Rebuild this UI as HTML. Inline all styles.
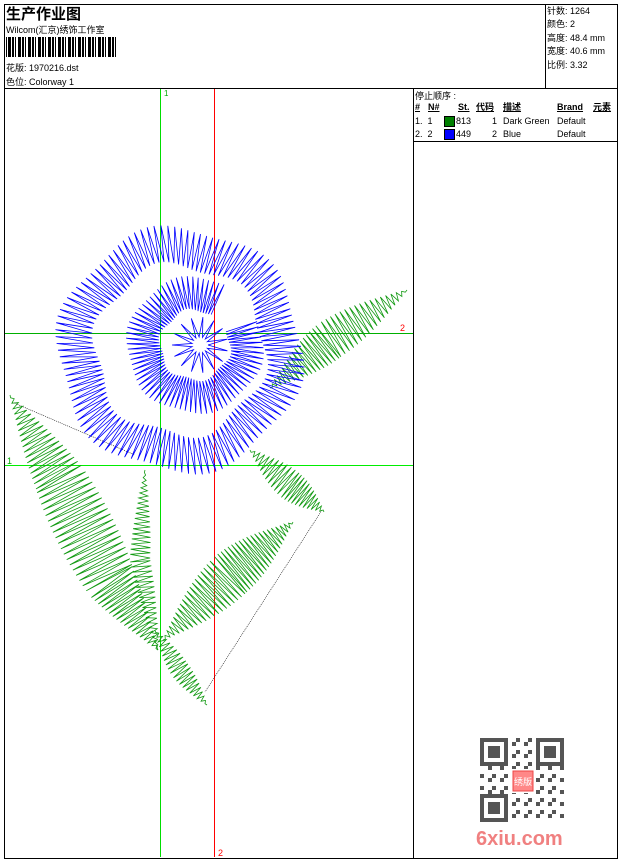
<!DOCTYPE html>
<html><head><meta charset="utf-8"><style>
body{margin:0;width:620px;height:860px;background:#fff;position:relative;overflow:hidden;font-family:"Liberation Sans","Noto Sans CJK SC",sans-serif;color:#000}
.a{position:absolute}
.t{font-size:10px;white-space:nowrap}
</style></head><body>
<div class="a" style="left:4px;top:4px;width:612px;height:853px;border:1px solid #000"></div>
<div class="a" style="left:4px;top:88px;width:613px;height:1px;background:#000"></div>
<div class="a" style="left:545px;top:4px;width:1px;height:84px;background:#000"></div>
<div class="a" style="left:413px;top:88px;width:1px;height:770px;background:#000"></div>
<div class="a" style="left:413px;top:141px;width:204px;height:1px;background:#000"></div>
<div class="a" style="left:6px;top:3px;font-size:15px;font-weight:bold">生产作业图</div>
<div class="a t" style="left:6px;top:23px;font-size:9px">Wilcom(汇京)绣饰工作室</div>
<svg class="a" style="left:6px;top:37px" width="114" height="20" id="bc"></svg>
<div class="a t" style="left:6px;top:61px;font-size:9px">花版: 1970216.dst</div>
<div class="a t" style="left:6px;top:75px;font-size:9px">色位: Colorway 1</div>
<div class="a t" style="left:547px;top:5px;font-size:9px;line-height:13.4px">针数: 1264<br>颜色: 2<br>高度: 48.4 mm<br>宽度: 40.6 mm<br>比例: 3.32</div>
<div class="a t" style="left:415px;top:89px;font-size:9px">停止顺序 :</div>
<div class="a" style="left:415px;top:101px;font-size:9px;line-height:13px;white-space:nowrap">
<span class="a" style="left:0;font-weight:bold;text-decoration:underline">#</span>
<span class="a" style="left:13px;font-weight:bold;text-decoration:underline">N#</span>
<span class="a" style="left:43px;font-weight:bold;text-decoration:underline">St.</span>
<span class="a" style="left:61px;font-weight:bold;text-decoration:underline">代码</span>
<span class="a" style="left:88px;font-weight:bold;text-decoration:underline">描述</span>
<span class="a" style="left:142px;font-weight:bold;text-decoration:underline">Brand</span>
<span class="a" style="left:178px;font-weight:bold;text-decoration:underline">元素</span>
<span class="a" style="left:0;top:14px">1.&nbsp;&nbsp;1</span>
<span class="a" style="left:29px;top:15px;width:9px;height:9px;background:#008000;border:1px solid #000"></span>
<span class="a" style="left:41px;top:14px">813</span>
<span class="a" style="left:77px;top:14px">1</span>
<span class="a" style="left:88px;top:14px">Dark Green</span>
<span class="a" style="left:142px;top:14px">Default</span>
<span class="a" style="left:0;top:27px">2.&nbsp;&nbsp;2</span>
<span class="a" style="left:29px;top:28px;width:9px;height:9px;background:#0000ff;border:1px solid #000"></span>
<span class="a" style="left:41px;top:27px">449</span>
<span class="a" style="left:77px;top:27px">2</span>
<span class="a" style="left:88px;top:27px">Blue</span>
<span class="a" style="left:142px;top:27px">Default</span>
</div>
<svg class="a" style="left:0;top:0" width="413" height="860" id="d">
<line x1="160.5" y1="89" x2="160.5" y2="857" stroke="#00dd00"/>
<line x1="5" y1="465.5" x2="413" y2="465.5" stroke="#00ee00"/>
<line x1="214.5" y1="89" x2="214.5" y2="857" stroke="#ff0000"/>
<line x1="5" y1="333.5" x2="413" y2="333.5" stroke="#00b000"/>
<text x="164" y="96" fill="#00aa00" font-size="8">1</text>
<text x="400" y="331" fill="#ff0000" font-size="9">2</text>
<text x="7" y="464" fill="#00aa00" font-size="9">1</text>
<text x="218" y="856" fill="#ff0000" font-size="9">2</text>
<line x1="12" y1="402" x2="135" y2="455" stroke="#000" stroke-width="0.6" stroke-dasharray="1,1"/>
<line x1="322" y1="510" x2="205" y2="692" stroke="#000" stroke-width="0.6" stroke-dasharray="1,1"/>
</svg>
<svg class="a" style="left:480px;top:738px" width="86" height="86">
<rect width="86" height="86" fill="#fff"/>
<g id="qr" fill="#555"></g>
<rect x="31" y="31" width="24" height="24" fill="#fff"/>
<rect x="33" y="33" width="20" height="20" fill="#f88" stroke="#e44"/>
<text x="43" y="47" font-size="9" fill="#fff" text-anchor="middle">绣版</text>
</svg>
<div class="a" style="left:476px;top:828px;font-size:20px;font-weight:bold;color:#f08080">6xiu.com</div>
<script>
var bc=document.getElementById('bc'),x=0;
while(x<112){var w=[1,1,2,1,3][(x*7)%5];bc.innerHTML+='<rect x="'+x+'" y="0" width="'+w+'" height="20"/>';x+=w+1+((x*3)%2);}
var q=document.getElementById('qr'),h='';
for(var i=0;i<21;i++)for(var j=0;j<21;j++){var f=((i<7&&j<7)||(i<7&&j>13)||(i>13&&j<7));var on=((i*31+j*17+i*j)%3==0);
if(f){var ii=i>13?i-14:i,jj=j>13?j-14:j;on=(ii==0||ii==6||jj==0||jj==6||(ii>=2&&ii<=4&&jj>=2&&jj<=4));}
if(on)h+='<rect x="'+(i*4)+'" y="'+(j*4)+'" width="4" height="4"/>';}
q.innerHTML=h;
var d=document.getElementById('d'),out='';
function leaf(pts,wmax,n,col){var p='';for(var k=0;k<=n;k++){var t=k/n,seg=t*(pts.length-1),i=Math.min(Math.floor(seg),pts.length-2),u=seg-i;
var x=pts[i][0]+(pts[i+1][0]-pts[i][0])*u,y=pts[i][1]+(pts[i+1][1]-pts[i][1])*u;var dx=pts[i+1][0]-pts[i][0],dy=pts[i+1][1]-pts[i][1],L=Math.hypot(dx,dy);
var nx=-dy/L,ny=dx/L,w=wmax*Math.sin(Math.PI*t)*(k%2?1:-1);p+=(k?'L':'M')+(x+nx*w).toFixed(1)+' '+(y+ny*w).toFixed(1);}
out+='<path d="'+p+'" fill="none" stroke="'+col+'" stroke-width="0.8"/>';}
var G='#119911';
leaf([[270,388],[330,340],[407,290]],20,70,G);
leaf([[10,395],[60,480],[110,580],[158,650]],30,110,G);
leaf([[145,470],[140,560],[158,650]],10,70,G);
leaf([[163,640],[230,575],[293,522]],24,80,G);
leaf([[250,450],[290,485],[324,512]],15,45,G);
leaf([[155,630],[180,670],[207,705]],10,40,G);
function ring(cx,cy,r1,r2,a0,a1,n,wob){var p='';for(var k=0;k<=n;k++){var a=a0+(a1-a0)*k/n;var r=(k%2?r2:r1)+wob*Math.sin(a*6);
p+=(k?'L':'M')+(cx+r*Math.cos(a)).toFixed(1)+' '+(cy+r*Math.sin(a)).toFixed(1);}out+='<path d="'+p+'" fill="none" stroke="#0000ff" stroke-width="0.8"/>';}
ring(180,350,85,122,0,6.28,230,5);
ring(195,345,35,68,-0.4,5.2,140,2);
ring(200,345,8,28,0,6.28,30,0);
d.innerHTML+=out;
</script>
</body></html>
